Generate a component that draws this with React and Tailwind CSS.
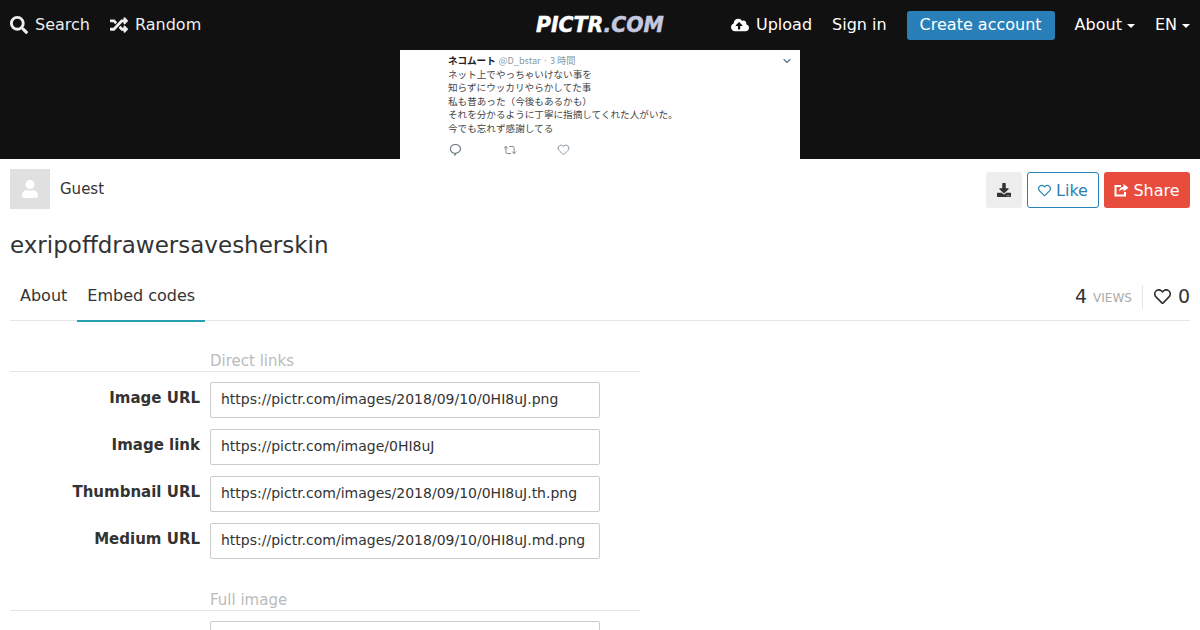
import { ChevronDown, Heart, Repeat2 } from 'lucide-react'
import { FaCloudUploadAlt, FaDownload, FaRandom, FaRegHeart, FaSearch, FaUser } from 'react-icons/fa'

const directLinks = [
  ['Image URL', 'https://pictr.com/images/2018/09/10/0HI8uJ.png'],
  ['Image link', 'https://pictr.com/image/0HI8uJ'],
  ['Thumbnail URL', 'https://pictr.com/images/2018/09/10/0HI8uJ.th.png'],
  ['Medium URL', 'https://pictr.com/images/2018/09/10/0HI8uJ.md.png'],
]

const tweetLines = [
  'ネット上でやっちゃいけない事を',
  '知らずにウッカリやらかしてた事',
  '私も昔あった（今後もあるかも）',
  'それを分かるように丁寧に指摘してくれた人がいた。',
  '今でも忘れず感謝してる',
]

function Caret() {
  return <span className="ml-[5px] inline-block border-x-[4px] border-t-[4px] border-x-transparent border-t-white align-middle" />
}

function ShareIcon() {
  return (
    <svg viewBox="0 0 15 13" className="w-[15px] h-[13px]" fill="none">
      <path d="M7 2H1.5v9.5h9.5V8" stroke="currentColor" strokeWidth="2" />
      <path d="M9.5 0l5 3.7-5 3.7V5.2C7.5 5.2 6 6 5 8c0-3 1.7-5.1 4.5-5.2V0z" fill="currentColor" />
    </svg>
  )
}

function ReplyIcon() {
  return (
    <svg viewBox="0 0 13 13" className="w-[13px] h-[13px] mr-[41px]" fill="none" stroke="currentColor" strokeWidth="1.1">
      <path d="M6.5 1.5c3 0 5 2 5 4.3s-2.4 3.9-4.4 4.4l-1.2 1.9v-1.9C3.3 10.5 1.5 8.4 1.5 5.9s2-4.4 5-4.4z" />
    </svg>
  )
}

function Field({ label, value }) {
  return (
    <div className="flex mb-[11px]">
      <label className="w-[190px] mr-[10px] pt-[6px] text-right font-bold text-[15px] text-[#333] leading-[20px]">{label}</label>
      <div className="w-[390px] h-[36px] flex items-center pb-[1px] px-[10px] border border-[#ccc] rounded-[2px] text-[14px] text-[#333] bg-white whitespace-nowrap">
        {value}
      </div>
    </div>
  )
}

function Heading({ children }) {
  return (
    <div className="border-b border-[#e5e5e5] pl-[200px] pt-[1px] text-[#bbb] text-[15px] leading-[20px] h-[22px]">
      {children}
    </div>
  )
}

export default function App() {
  return (
    <div className="h-[630px] overflow-hidden bg-white font-['DejaVu_Sans',sans-serif] text-[#333]">
      {/* Top bar */}
      <div className="relative h-[50px] bg-[#111] text-[#eee] flex items-center justify-between px-[10px] text-[16px]">
        <div className="flex items-center gap-5">
          <span className="flex items-center gap-[7px]"><FaSearch className="text-[18px]" /> Search</span>
          <span className="flex items-center gap-[7px]"><FaRandom className="text-[18px]" /> Random</span>
        </div>
        <div className="absolute left-[536px] top-[12px] font-bold italic text-[20.4px] leading-[26px] text-white [-webkit-text-stroke:0.5px_#fff]">
          PICTR<span className="text-[#c5c9e0] [-webkit-text-stroke:0.5px_#c5c9e0]">.COM</span>
        </div>
        <div className="flex items-center text-white">
          <span className="flex items-center gap-[7px] mr-5"><FaCloudUploadAlt className="text-[18px]" /> Upload</span>
          <span className="mr-5">Sign in</span>
          <span className="h-[29px] flex items-center px-[13px] rounded-[3px] bg-[#2980b9] mr-5">Create account</span>
          <span className="mr-5">About<Caret /></span>
          <span>EN<Caret /></span>
        </div>
      </div>

      {/* Image viewer */}
      <div className="h-[109px] bg-[#111] flex justify-center">
        <div className="relative w-[400px] h-[109px] bg-white overflow-hidden font-['Noto_Sans_CJK_JP',sans-serif] text-[9.6px] leading-[13.6px] text-[#444] pl-[48px] pt-[4px]">
          <div className="whitespace-nowrap">
            <span className="font-bold text-[#222]">ネコムート</span>
            <span className="text-[#8a99a6] ml-[3px] text-[9.2px]">@D_bstar · 3 時間</span>
          </div>
          {tweetLines.map(line => (
            <div key={line} className="whitespace-nowrap">{line}</div>
          ))}
          <ChevronDown className="absolute left-[381px] top-[5px] w-[12px] h-[12px] text-[#55708a]" strokeWidth={2.2} />
          <div className="absolute left-[49px] top-[93px] flex text-[#66757f]">
            <ReplyIcon />
            <Repeat2 className="w-[14px] h-[14px] mr-[40px]" strokeWidth={1.4} />
            <Heart className="w-[13px] h-[13px]" strokeWidth={1.4} />
          </div>
        </div>
      </div>

      <div className="px-[10px]">
        {/* Owner + actions */}
        <div className="flex justify-between pt-[10px]">
          <div className="flex">
            <div className="w-[40px] h-[40px] bg-[#e0e0e0] flex items-center justify-center text-white overflow-hidden">
              <FaUser className="text-[18px]" />
            </div>
            <span className="ml-[10px] mt-[10px] text-[15px] leading-[20px]">Guest</span>
          </div>
          <div className="flex gap-[5px] mt-[3px] text-[16px]">
            <button className="w-[36px] h-[36px] flex items-center justify-center rounded-[3px] bg-[#eee] text-[#333]">
              <FaDownload className="text-[14px]" />
            </button>
            <button className="w-[72px] h-[36px] flex items-center justify-center gap-[5px] pt-[1px] rounded-[3px] border border-[#2980b9] text-[#2980b9] bg-white">
              <FaRegHeart className="text-[13px]" /> Like
            </button>
            <button className="w-[86px] h-[36px] flex items-center justify-center gap-[4px] pt-[1px] rounded-[3px] bg-[#e74c3c] text-white">
              <ShareIcon /> Share
            </button>
          </div>
        </div>

        <h1 className="mt-[20px] text-[23px] leading-[32px] text-[#333]">exripoffdrawersavesherskin</h1>

        {/* Tabs */}
        <div className="mt-[14px] h-[46px] flex justify-between border-b border-[#e5e5e5]">
          <div className="flex text-[16px]">
            <span className="px-[10px] pt-[9px]">About</span>
            <span className="px-[10px] pt-[9px] h-[47px] border-b-2 border-[#26a0ad]">Embed codes</span>
          </div>
          <div className="flex items-start pt-[10px]">
            <span className="text-[19px] leading-[22px]">4</span>
            <span className="ml-[6px] mt-[6px] text-[12px] leading-[14px] text-[#aaa]">VIEWS</span>
            <span className="ml-[10px] pl-[11px] h-[24px] border-l border-[#e5e5e5] flex items-start">
              <FaRegHeart className="mt-[3px] text-[17px]" />
              <span className="ml-[7px] text-[19px] leading-[22px]">0</span>
            </span>
          </div>
        </div>

        {/* Embed codes */}
        <div className="w-[630px] mt-[29px]">
          <Heading>Direct links</Heading>
          <div className="mt-[10px]">
            {directLinks.map(([label, value]) => (
              <Field key={label} label={label} value={value} />
            ))}
          </div>
          <div className="mt-[30px]">
            <Heading>Full image</Heading>
          </div>
          <div className="mt-[10px]">
            <Field label="" value="" />
          </div>
        </div>
      </div>
    </div>
  )
}
